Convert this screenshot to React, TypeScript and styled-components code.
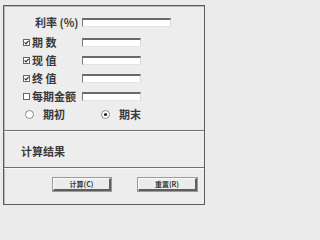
import * as React from "react";
import styled, { createGlobalStyle } from "styled-components";

const GlobalStyle = createGlobalStyle`
  html, body {
    margin: 0;
    padding: 0;
    background: #ebebeb;
  }
  body {
    font-family: "Noto Sans CJK SC", "Liberation Sans", sans-serif;
    color: #3a3a3a;
  }
`;

const Page = styled.div`
  width: 211px;
  height: 210px;
  padding: 5px 0 0 3px;
  box-sizing: border-box;
`;

const Frame = styled.div`
  width: 202px;
  height: 200px;
  box-sizing: border-box;
  border: 1px solid #5c5c5c;
  box-shadow: inset 1px 1px 0 #b8b8b8;
  background: #ededed;
  display: flex;
  flex-direction: column;
`;

const Form = styled.div`
  padding: 7px 0 7px 0;
  display: flex;
  flex-direction: column;
`;

const Row = styled.div<{ $gapBelow?: number }>`
  height: 18px;
  display: flex;
  align-items: center;
  margin-bottom: ${(p) => p.$gapBelow ?? 0}px;
`;

const Lead = styled.div`
  width: 28px;
  padding-left: 19px;
  box-sizing: border-box;
  display: flex;
  align-items: center;
`;

const Label = styled.span<{ $width: number; $indent?: number }>`
  width: ${(p) => p.$width}px;
  padding-left: ${(p) => p.$indent ?? 0}px;
  box-sizing: border-box;
  font-size: 11px;
  font-weight: 700;
  white-space: pre;
  line-height: 1;
`;

const Field = styled.div<{ $width: number }>`
  width: ${(p) => p.$width}px;
  height: 9px;
  box-sizing: border-box;
  background: #fff;
  border-top: 2px solid #6a6a6a;
  border-left: 1px solid #7a7a7a;
  border-right: 1px solid #d8d8d8;
  border-bottom: 1px solid #e4e4e4;
`;

const RadioRow = styled.div`
  height: 18px;
  display: flex;
  align-items: center;
  padding-left: 21px;
`;

const RadioItem = styled.div<{ $width: number }>`
  width: ${(p) => p.$width}px;
  display: flex;
  align-items: center;
  gap: 9px;
  font-size: 11px;
  font-weight: 700;
  line-height: 1;
`;

const Divider = styled.div`
  height: 1px;
  background: #707070;
  box-shadow: 0 1px 0 #f8f8f8;
`;

const Result = styled.div`
  height: 36px;
  display: flex;
  align-items: center;
  padding-left: 17px;
  padding-top: 4px;
  box-sizing: border-box;
  font-size: 11px;
  font-weight: 700;
`;

const Actions = styled.div`
  flex: 1;
  display: flex;
  align-items: flex-start;
  padding: 10px 0 0 49px;
  gap: 27px;
`;

const Button = styled.button<{ $width: number }>`
  width: ${(p) => p.$width}px;
  height: 13px;
  padding: 0;
  box-sizing: border-box;
  background: #ececec;
  border-top: 1px solid #fafafa;
  border-left: 1px solid #fafafa;
  border-right: 2px solid #5e5e5e;
  border-bottom: 2px solid #5e5e5e;
  outline: 1px solid #9a9a9a;
  font-family: "Noto Sans CJK SC", "Liberation Sans", sans-serif;
  font-size: 7px;
  font-weight: 700;
  color: #3a3a3a;
  line-height: 1;
  display: flex;
  align-items: center;
  justify-content: center;
`;

const CheckBox: React.FC<{ checked: boolean }> = ({ checked }) => (
  <svg width="7" height="7" viewBox="0 0 7 7">
    <rect x="0.5" y="0.5" width="6" height="6" fill="#fff" stroke="#666" />
    {checked && <path d="M1.6 3.4 L3 4.8 L5.6 1.8" fill="none" stroke="#333" strokeWidth="1.2" />}
  </svg>
);

const Radio: React.FC<{ checked: boolean }> = ({ checked }) => (
  <svg width="9" height="9" viewBox="0 0 9 9">
    <circle cx="4.5" cy="4.5" r="4" fill="#fff" stroke="#8a8a8a" />
    {checked && <circle cx="4.5" cy="4.5" r="1.6" fill="#222" />}
  </svg>
);

const rows = [
  { text: "期 数", checked: true },
  { text: "现 值", checked: true },
  { text: "终 值", checked: true },
  { text: "每期金额", checked: false },
];

export default function App() {
  return (
    <>
      <GlobalStyle />
      <Page>
        <Frame>
          <Form>
            <Row $gapBelow={2}>
              <Lead />
              <Label $width={50} $indent={3}>利率 (%)</Label>
              <Field $width={89} />
            </Row>
            {rows.map((r, i) => (
              <Row key={i}>
                <Lead>
                  <CheckBox checked={r.checked} />
                </Lead>
                <Label $width={50}>{r.text}</Label>
                <Field $width={59} />
              </Row>
            ))}
            <RadioRow>
              <RadioItem $width={76}>
                <Radio checked={false} />
                期初
              </RadioItem>
              <RadioItem $width={60}>
                <Radio checked={true} />
                期末
              </RadioItem>
            </RadioRow>
          </Form>
          <Divider />
          <Result>计算结果</Result>
          <Divider />
          <Actions>
            <Button $width={58}>计算(C)</Button>
            <Button $width={59}>重置(R)</Button>
          </Actions>
        </Frame>
      </Page>
    </>
  );
}
